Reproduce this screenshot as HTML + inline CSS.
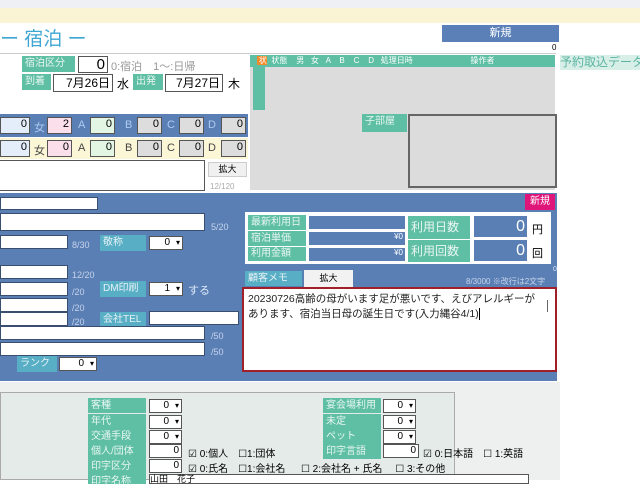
<!DOCTYPE html>
<html><head><meta charset="utf-8"><style>
*{box-sizing:border-box;margin:0;padding:0}
body{width:640px;height:480px;overflow:hidden;background:#fff;font-family:"Liberation Sans","Noto Sans CJK JP",sans-serif;position:relative;font-size:10px}
.a{position:absolute}
.g{position:absolute;background:#5fbfa5;color:#e8f6f1;font-size:10px;padding-left:3px;line-height:16px}
.box{position:absolute;border:1px solid #555;background:#fff;text-align:right;padding-right:2px}
.w{position:absolute;background:#fff;border:1px solid #3a4f70}
.cnt{position:absolute;color:#c7d4ea;font-size:9px}
.sel{position:absolute;background:#fff;border:1px solid #555;font-size:10px;text-align:right;padding-right:12px;line-height:12px;height:14px}
.sel:after{content:"▾";position:absolute;right:2px;top:0;font-size:8px}
.lb{position:absolute;background:#58aec4;color:#e6f2f7;font-size:10px;padding-left:3px;line-height:16px}
.l1{position:absolute;color:#aecbf2;font-size:11px;top:119px}
.l2{position:absolute;color:#444;font-size:11px;top:142px}
</style></head><body>
<div class="a" style="left:0;top:0;width:640px;height:8px;background:#eef0f5"></div>
<div class="a" style="left:0;top:8px;width:640px;height:15px;background:#fbf4d4"></div>
<div class="a" style="left:0;top:28px;color:#3ea6d2;font-size:19px;line-height:24px">ー 宿泊 ー</div>
<div class="a" style="left:442px;top:25px;width:117px;height:17px;background:#5b80b8;color:#fff;text-align:center;font-size:11px;line-height:17px">新規</div>
<div class="a" style="left:552px;top:43px;font-size:8px">0</div>
<div class="a" style="left:0;top:53px;width:556px;height:1px;background:#ccc"></div>
<div class="g" style="left:22px;top:56px;width:53px">宿泊区分</div>
<div class="box" style="left:78px;top:56px;width:30px;height:17px;font-size:15px;line-height:15px">0</div>
<div class="a" style="left:111px;top:58px;color:#999;font-size:11px">0:宿泊　1～:日帰</div>
<div class="g" style="left:22px;top:74px;width:29px">到着</div>
<div class="box" style="left:53px;top:74px;width:60px;height:18px;font-size:12px;line-height:16px">7月26日</div>
<div class="a" style="left:117px;top:75px;font-size:12px">水</div>
<div class="g" style="left:133px;top:74px;width:30px">出発</div>
<div class="box" style="left:165px;top:74px;width:58px;height:18px;font-size:12px;line-height:16px">7月27日</div>
<div class="a" style="left:228px;top:75px;font-size:12px">木</div>
<div class="a" style="left:250px;top:55px;width:305px;height:135px;background:#dcdcdc"></div>
<div class="a" style="left:250px;top:55px;width:305px;height:12px;background:#5fbfa5;color:#fff;font-size:8px;line-height:12px;white-space:pre">   <span style="background:#f08a2a"> 状</span>  状態    男   女   A    B    C    D   処理日時                          操作者</div>
<div class="a" style="left:253px;top:67px;width:12px;height:43px;background:#5fbfa5"></div>
<div class="a" style="left:560px;top:55px;width:80px;height:15px;background:#d8efe8;color:#5ab3a0;font-size:12px;line-height:15px;white-space:nowrap">予約取込データ</div>
<div class="a" style="left:0;top:114px;width:248px;height:23px;background:#5a7fb5"></div>
<div class="a" style="left:0;top:138px;width:248px;height:21px;background:#fbf6d6"></div>
<div class="box" style="left:0;top:117px;width:30px;height:17px;background:#e4eefa;font-size:11px">0</div>
<div class="box" style="left:47px;top:117px;width:25px;height:17px;background:#fbe0ec;font-size:11px">2</div>
<div class="box" style="left:90px;top:117px;width:25px;height:17px;background:#e3f6e3;font-size:11px">0</div>
<div class="box" style="left:137px;top:117px;width:25px;height:17px;background:#ddd;font-size:11px">0</div>
<div class="box" style="left:179px;top:117px;width:25px;height:17px;background:#ddd;font-size:11px">0</div>
<div class="box" style="left:221px;top:117px;width:25px;height:17px;background:#ddd;font-size:11px">0</div>
<div class="l1" style="left:34px">女</div><div class="l1" style="left:78px">A</div><div class="l1" style="left:125px">B</div><div class="l1" style="left:167px">C</div><div class="l1" style="left:208px">D</div>
<div class="box" style="left:0;top:140px;width:30px;height:17px;background:#e4eefa;font-size:11px">0</div>
<div class="box" style="left:47px;top:140px;width:25px;height:17px;background:#fbe0ec;font-size:11px">0</div>
<div class="box" style="left:90px;top:140px;width:25px;height:17px;background:#e3f6e3;font-size:11px">0</div>
<div class="box" style="left:137px;top:140px;width:25px;height:17px;background:#ddd;font-size:11px">0</div>
<div class="box" style="left:179px;top:140px;width:25px;height:17px;background:#ddd;font-size:11px">0</div>
<div class="box" style="left:221px;top:140px;width:25px;height:17px;background:#ddd;font-size:11px">0</div>
<div class="l2" style="left:34px">女</div><div class="l2" style="left:78px">A</div><div class="l2" style="left:125px">B</div><div class="l2" style="left:167px">C</div><div class="l2" style="left:208px">D</div>
<div class="box" style="left:-2px;top:160px;width:207px;height:31px"></div>
<div class="a" style="left:208px;top:162px;width:39px;height:15px;background:#f0f0f0;border:1px solid #ccc;font-size:9px;text-align:center;line-height:13px">拡大</div>
<div class="a" style="left:210px;top:182px;color:#aaa;font-size:8px">12/120</div>
<div class="g" style="left:362px;top:114px;width:45px;height:18px">子部屋</div>
<div class="a" style="left:408px;top:114px;width:149px;height:74px;background:#dcdcdc;border:2px solid #666"></div>
<div class="a" style="left:0;top:193px;width:557px;height:188px;background:#5a7fb5"></div>
<div class="a" style="left:525px;top:194px;width:30px;height:16px;background:#e0157a;color:#fff;text-align:center;font-size:10px;line-height:16px">新規</div>
<div class="w" style="left:0;top:197px;width:98px;height:13px"></div>
<div class="w" style="left:0;top:213px;width:205px;height:18px"></div><div class="cnt" style="left:211px;top:222px">5/20</div>
<div class="w" style="left:0;top:235px;width:68px;height:14px"></div><div class="cnt" style="left:72px;top:240px">8/30</div>
<div class="lb" style="left:100px;top:235px;width:46px">敬称</div><div class="sel" style="left:149px;top:236px;width:34px">0</div>
<div class="w" style="left:0;top:265px;width:68px;height:14px"></div><div class="cnt" style="left:72px;top:270px">12/20</div>
<div class="w" style="left:0;top:282px;width:68px;height:14px"></div><div class="cnt" style="left:72px;top:287px">/20</div>
<div class="w" style="left:0;top:298px;width:68px;height:14px"></div><div class="cnt" style="left:72px;top:303px">/20</div>
<div class="w" style="left:0;top:312px;width:68px;height:14px"></div><div class="cnt" style="left:72px;top:317px">/20</div>
<div class="lb" style="left:100px;top:281px;width:46px">DM印刷</div><div class="sel" style="left:149px;top:282px;width:34px">1</div>
<div class="a" style="left:188px;top:282px;color:#dde8f8;font-size:11px">する</div>
<div class="lb" style="left:100px;top:312px;width:46px">会社TEL</div><div class="w" style="left:149px;top:311px;width:90px;height:14px"></div>
<div class="w" style="left:0;top:326px;width:205px;height:14px"></div><div class="cnt" style="left:211px;top:331px">/50</div>
<div class="w" style="left:0;top:342px;width:205px;height:14px"></div><div class="cnt" style="left:211px;top:347px">/50</div>
<div class="lb" style="left:17px;top:356px;width:40px">ランク</div><div class="sel" style="left:59px;top:357px;width:38px">0</div>
<div class="a" style="left:245px;top:212px;width:306px;height:52px;background:#fff"></div>
<div class="g" style="left:248px;top:215px;width:58px;height:15px;line-height:15px">最新利用日</div>
<div class="g" style="left:248px;top:231px;width:58px;height:15px;line-height:15px">宿泊単価</div>
<div class="g" style="left:248px;top:247px;width:58px;height:14px;line-height:14px">利用金額</div>
<div class="a" style="left:309px;top:216px;width:96px;height:13px;background:#5a7fb5"></div>
<div class="a" style="left:309px;top:232px;width:96px;height:13px;background:#5a7fb5;color:#fff;font-size:8px;text-align:right;padding-right:2px">¥0</div>
<div class="a" style="left:309px;top:248px;width:96px;height:13px;background:#5a7fb5;color:#fff;font-size:8px;text-align:right;padding-right:2px">¥0</div>
<div class="g" style="left:408px;top:216px;width:62px;height:23px;line-height:23px;font-size:12px">利用日数</div>
<div class="g" style="left:408px;top:240px;width:62px;height:22px;line-height:22px;font-size:12px">利用回数</div>
<div class="a" style="left:474px;top:216px;width:53px;height:21px;background:#5a7fb5;color:#fff;font-size:16px;text-align:right;padding-right:2px;line-height:21px">0</div>
<div class="a" style="left:474px;top:240px;width:53px;height:21px;background:#5a7fb5;color:#fff;font-size:16px;text-align:right;padding-right:2px;line-height:21px">0</div>
<div class="a" style="left:532px;top:221px;font-size:11px">円</div>
<div class="a" style="left:532px;top:245px;font-size:11px">回</div>
<div class="lb" style="left:245px;top:271px;width:57px;height:15px;line-height:15px">顧客メモ</div>
<div class="a" style="left:304px;top:270px;width:49px;height:17px;background:#f2f2f2;font-size:9px;text-align:center;line-height:17px">拡大</div>
<div class="a" style="left:553px;top:266px;color:#dde8f8;font-size:7px">0</div>
<div class="a" style="left:466px;top:276px;color:#c7d4ea;font-size:8px">8/3000 ※改行は2文字</div>
<div class="a" style="left:242px;top:287px;width:315px;height:85px;background:#fff;border:2px solid #a0202a;padding:3px 4px;color:#222"><div style="width:290px;font-size:10.5px;line-height:15px">20230726高齢の母がいます足が悪いです、えびアレルギーがあります、宿泊当日母の誕生日です(入力縄谷4/1)<span style="border-left:1px solid #000"></span></div></div>
<div class="a" style="left:547px;top:300px;width:1px;height:12px;background:#666"></div>
<div class="a" style="left:0;top:382px;width:560px;height:98px;background:#eeefef"></div>
<div class="a" style="left:0;top:392px;width:455px;height:88px;background:#e4ebe9;border:1px solid #aaa"></div>
<div class="g" style="left:88px;top:398px;width:58px;height:15px;line-height:15px">客種</div>
<div class="g" style="left:88px;top:414px;width:58px;height:15px;line-height:15px">年代</div>
<div class="g" style="left:88px;top:429px;width:58px;height:15px;line-height:15px">交通手段</div>
<div class="g" style="left:88px;top:444px;width:58px;height:15px;line-height:15px">個人/団体</div>
<div class="g" style="left:88px;top:459px;width:58px;height:15px;line-height:15px">印字区分</div>
<div class="g" style="left:88px;top:474px;width:58px;height:10px">印字名称</div>
<div class="sel" style="left:149px;top:399px;width:33px">0</div>
<div class="sel" style="left:149px;top:415px;width:33px">0</div>
<div class="sel" style="left:149px;top:430px;width:33px">0</div>
<div class="box" style="left:149px;top:444px;width:33px;height:14px;font-size:10px;line-height:12px">0</div>
<div class="box" style="left:149px;top:459px;width:33px;height:14px;font-size:10px;line-height:12px">0</div>
<div class="box" style="left:149px;top:474px;width:380px;height:10px;text-align:left;font-size:9px;line-height:8px">山田　花子</div>
<div class="a" style="left:188px;top:445px;font-size:10px;white-space:pre">☑ 0:個人　☐1:団体</div>
<div class="a" style="left:188px;top:460px;font-size:10px;white-space:pre">☑ 0:氏名　☐1:会社名　  ☐ 2:会社名 + 氏名　 ☐ 3:その他</div>
<div class="g" style="left:323px;top:398px;width:58px;height:15px;line-height:15px">宴会場利用</div>
<div class="g" style="left:323px;top:414px;width:58px;height:15px;line-height:15px">未定</div>
<div class="g" style="left:323px;top:429px;width:58px;height:15px;line-height:15px">ペット</div>
<div class="g" style="left:323px;top:444px;width:58px;height:15px;line-height:15px">印字言語</div>
<div class="sel" style="left:383px;top:399px;width:33px">0</div>
<div class="sel" style="left:383px;top:415px;width:33px">0</div>
<div class="sel" style="left:383px;top:430px;width:33px">0</div>
<div class="box" style="left:383px;top:444px;width:36px;height:14px;font-size:10px;line-height:12px">0</div>
<div class="a" style="left:423px;top:445px;font-size:10px;white-space:pre">☑ 0:日本語　☐ 1:英語</div>
</body></html>
